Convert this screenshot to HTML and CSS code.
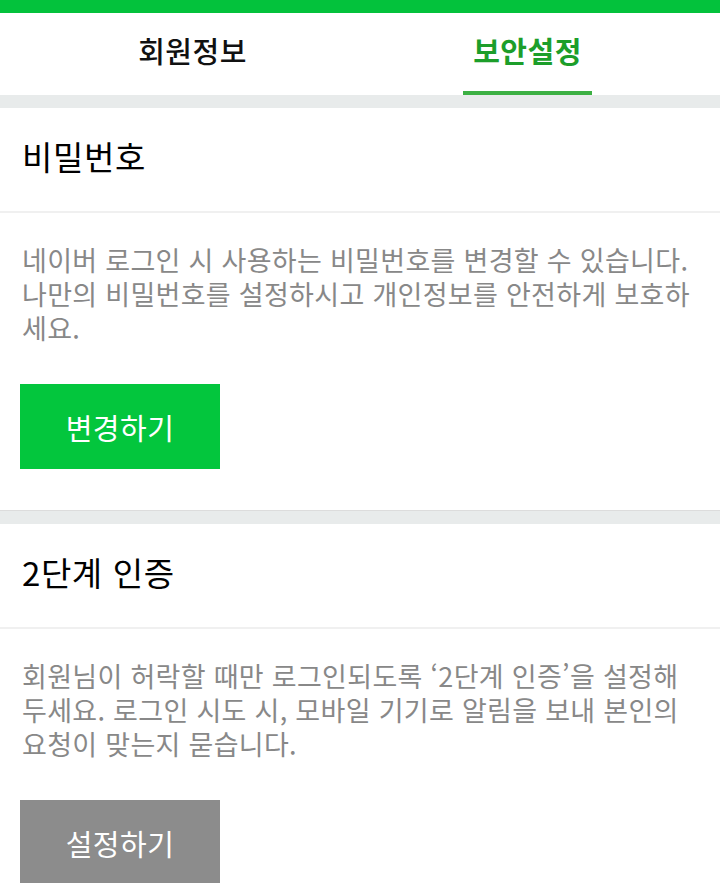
FILE: index.html
```html
<!DOCTYPE html>
<html lang="ko">
<head>
<meta charset="utf-8">
<link rel="stylesheet" href="styles.css">
</head>
<body>
<div class="topbar"></div>
<nav class="tabs">
  <div class="tab">회원정보</div>
  <div class="tab active">보안설정</div>
</nav>
<section class="card">
  <h2 class="card-title">비밀번호</h2>
  <div class="card-body">
    <p class="desc">네이버 로그인 시 사용하는 비밀번호를 변경할 수 있습니다.<br>나만의 비밀번호를 설정하시고 개인정보를 안전하게 보호하<br>세요.</p>
    <button class="btn btn-green">변경하기</button>
  </div>
</section>
<section class="card">
  <h2 class="card-title">2단계 인증</h2>
  <div class="card-body">
    <p class="desc">회원님이 허락할 때만 로그인되도록 ‘2단계 인증’을 설정해<br>두세요. 로그인 시도 시, 모바일 기기로 알림을 보내 본인의<br>요청이 맞는지 묻습니다.</p>
    <button class="btn btn-gray">설정하기</button>
  </div>
</section>
</body>
</html>
```
FILE: styles.css
```css
html, body {
  margin: 0;
  padding: 0;
}
body {
  background: #e8ebeb;
  font-family: "Noto Sans CJK KR", "Noto Sans", sans-serif;
  overflow: hidden;
}
.topbar {
  height: 13px;
  background: #03c23c;
}
.tabs {
  display: flex;
  justify-content: center;
  gap: 206px;
  background: #fff;
  height: 82px;
}
.tab {
  width: 129px;
  box-sizing: border-box;
  text-align: center;
  font-size: 29px;
  font-weight: 500;
  color: #111;
  line-height: 74px;
  height: 82px;
  border-bottom: 4px solid transparent;
  letter-spacing: 0.5px;
  white-space: nowrap;
  display: flex;
  justify-content: center;
}
.tab.active {
  color: #1c9e2a;
  font-weight: 700;
  border-bottom-color: #3cb043;
}
.card {
  background: #fff;
  margin-top: 13px;
  border-bottom: 1px solid #dcdcdc;
}
.card-title {
  margin: 0;
  padding: 0 22px;
  height: 103px;
  line-height: 96px;
  font-size: 33px;
  font-weight: 400;
  letter-spacing: 0.6px;
  color: #000;
  border-bottom: 2px solid #f0f0f0;
}
.card-body {
  padding: 30px 22px 41px;
}
.desc {
  margin: 0;
  font-size: 27px;
  line-height: 34px;
  letter-spacing: 0.3px;
  color: #888;
  white-space: nowrap;
}
.btn {
  display: block;
  margin: 39px 0 0 -2px;
  width: 200px;
  height: 85px;
  border: 0;
  font-family: inherit;
  font-size: 29px;
  letter-spacing: 0.5px;
  color: #fff;
  padding: 0;
}
.btn-green {
  background: #03c63d;
}
.btn-gray {
  background: #8c8c8c;
}
```
